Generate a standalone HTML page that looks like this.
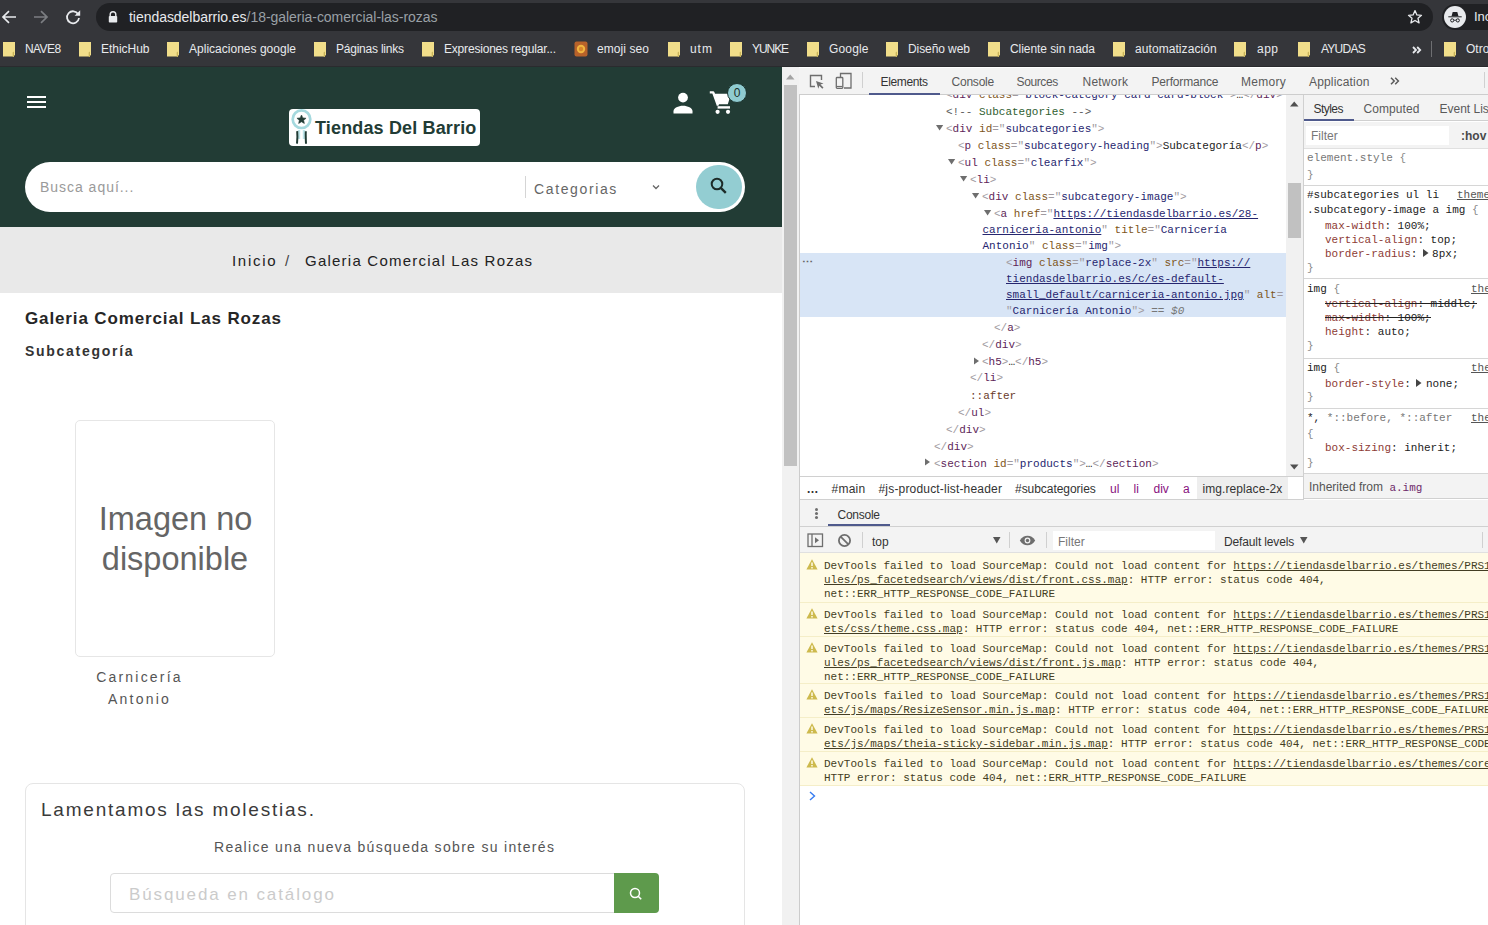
<!DOCTYPE html>
<html><head><meta charset="utf-8">
<style>
*{margin:0;padding:0;box-sizing:border-box}
html,body{width:1488px;height:925px;overflow:hidden;background:#fff;font-family:"Liberation Sans",sans-serif}
.a{position:absolute;white-space:nowrap}
#chrome{position:absolute;left:0;top:0;width:1488px;height:67px;background:#35363a}
#omni{position:absolute;left:96px;top:3px;width:1337px;height:28px;border-radius:14px;background:#202124}
.bm{position:absolute;top:41px;font-size:12px;color:#e8eaed;line-height:16px}
.fold{position:absolute;top:42px;width:12px;height:14px;background:#f1de8a}
#site{position:absolute;left:0;top:67px;width:782px;height:858px;background:#fff;overflow:hidden}
#pscroll{position:absolute;left:782px;top:67px;width:17px;height:858px;background:#f1f1f1}
#dt{position:absolute;left:799px;top:67px;width:689px;height:858px;background:#fff;border-left:1px solid #ccc;overflow:hidden}
.mono{font-family:"Liberation Mono",monospace;font-size:11px}
.tl{position:absolute;white-space:pre;font-family:"Liberation Mono",monospace;font-size:11px;line-height:16px}
.ui{position:absolute;white-space:nowrap;font-size:12px;line-height:16px}
.bm{white-space:nowrap}
#chrome{overflow:hidden}
</style></head><body>

<div id="chrome">
  <svg class="a" style="left:0;top:8px" width="18" height="18" viewBox="0 0 18 18"><path d="M16 9H3.5M9 3.2L3 9l6 5.8" stroke="#e8eaed" stroke-width="1.7" fill="none"/></svg>
  <svg class="a" style="left:32px;top:8px" width="18" height="18" viewBox="0 0 18 18"><path d="M2 9h12.5M9 3.2L15 9l-6 5.8" stroke="#7c7e82" stroke-width="1.7" fill="none"/></svg>
  <svg class="a" style="left:64px;top:8px" width="18" height="18" viewBox="0 0 18 18"><path d="M14.2 6.2A6 6 0 1 0 15 10" stroke="#e8eaed" stroke-width="1.8" fill="none"/><path d="M16.2 2.2v5.6h-5.6z" fill="#e8eaed"/></svg>
  <div id="omni"></div>
  <div class="a" style="left:0;top:66px;width:1488px;height:1px;background:#2a2b2e"></div>
  <svg class="a" style="left:108px;top:11px" width="10" height="12" viewBox="0 0 10 12"><path d="M2.2 5V3.6a2.8 2.8 0 0 1 5.6 0V5" stroke="#e8eaed" stroke-width="1.4" fill="none"/><rect x="0.8" y="5" width="8.4" height="6.5" rx="0.8" fill="#e8eaed"/></svg>
  <div class="a" style="left:129px;top:8px;font-size:14px;line-height:18px;color:#e8eaed;letter-spacing:-0.04px">tiendasdelbarrio.es<span style="color:#9aa0a6">/18-galeria-comercial-las-rozas</span></div>
  <svg class="a" style="left:1407px;top:9px" width="16" height="16" viewBox="0 0 16 16"><path d="M8 1.6l1.9 4.3 4.6.4-3.5 3 1.1 4.6L8 11.5l-4.1 2.4 1.1-4.6-3.5-3 4.6-.4z" stroke="#e8eaed" stroke-width="1.3" fill="none" stroke-linejoin="round"/></svg>
  <div class="a" style="left:1442px;top:4px;width:60px;height:26px;border-radius:13px;background:#202124"></div>
  <div class="a" style="left:1444px;top:6px;width:22px;height:22px;border-radius:11px;background:#e8eaed"></div>
  <svg class="a" style="left:1444px;top:6px" width="22" height="22" viewBox="0 0 22 22"><path d="M7.5 10.2l1.2-4.2h4.6l1.2 4.2z" fill="#202124"/><rect x="4.3" y="10.3" width="13.4" height="1" fill="#202124"/><circle cx="8.2" cy="14.4" r="1.6" stroke="#202124" stroke-width="1" fill="none"/><circle cx="13.8" cy="14.4" r="1.6" stroke="#202124" stroke-width="1" fill="none"/><path d="M9.8 14.2h2.4" stroke="#202124" stroke-width="0.9"/></svg>
  <div class="a" style="left:1474px;top:9px;font-size:13px;line-height:16px;color:#e8eaed">Incognito</div>
  <svg class="a" style="left:3px;top:42px" width="13" height="15" viewBox="0 0 13 15"><path d="M0 0h12v12.5l-1.2 2H0z" fill="#f1de8a"/><path d="M9.6 10.5l1.4-1v5.5H9.8z" fill="#c9b45a"/></svg>
  <div class="bm" style="left:25px;letter-spacing:-0.588px">NAVE8</div>
  <svg class="a" style="left:79px;top:42px" width="13" height="15" viewBox="0 0 13 15"><path d="M0 0h12v12.5l-1.2 2H0z" fill="#f1de8a"/><path d="M9.6 10.5l1.4-1v5.5H9.8z" fill="#c9b45a"/></svg>
  <div class="bm" style="left:101px;letter-spacing:-0.027px">EthicHub</div>
  <svg class="a" style="left:167px;top:42px" width="13" height="15" viewBox="0 0 13 15"><path d="M0 0h12v12.5l-1.2 2H0z" fill="#f1de8a"/><path d="M9.6 10.5l1.4-1v5.5H9.8z" fill="#c9b45a"/></svg>
  <div class="bm" style="left:189px;letter-spacing:0.015px">Aplicaciones google</div>
  <svg class="a" style="left:314px;top:42px" width="13" height="15" viewBox="0 0 13 15"><path d="M0 0h12v12.5l-1.2 2H0z" fill="#f1de8a"/><path d="M9.6 10.5l1.4-1v5.5H9.8z" fill="#c9b45a"/></svg>
  <div class="bm" style="left:336px;letter-spacing:-0.225px">Páginas links</div>
  <svg class="a" style="left:422px;top:42px" width="13" height="15" viewBox="0 0 13 15"><path d="M0 0h12v12.5l-1.2 2H0z" fill="#f1de8a"/><path d="M9.6 10.5l1.4-1v5.5H9.8z" fill="#c9b45a"/></svg>
  <div class="bm" style="left:444px;letter-spacing:-0.193px">Expresiones regular...</div>
  <div class="bm" style="left:597px;letter-spacing:0.068px">emoji seo</div>
  <svg class="a" style="left:668px;top:42px" width="13" height="15" viewBox="0 0 13 15"><path d="M0 0h12v12.5l-1.2 2H0z" fill="#f1de8a"/><path d="M9.6 10.5l1.4-1v5.5H9.8z" fill="#c9b45a"/></svg>
  <div class="bm" style="left:690px;letter-spacing:0.950px">utm</div>
  <svg class="a" style="left:730px;top:42px" width="13" height="15" viewBox="0 0 13 15"><path d="M0 0h12v12.5l-1.2 2H0z" fill="#f1de8a"/><path d="M9.6 10.5l1.4-1v5.5H9.8z" fill="#c9b45a"/></svg>
  <div class="bm" style="left:752px;letter-spacing:-1.061px">YUNKE</div>
  <svg class="a" style="left:807px;top:42px" width="13" height="15" viewBox="0 0 13 15"><path d="M0 0h12v12.5l-1.2 2H0z" fill="#f1de8a"/><path d="M9.6 10.5l1.4-1v5.5H9.8z" fill="#c9b45a"/></svg>
  <div class="bm" style="left:829px;letter-spacing:0.163px">Google</div>
  <svg class="a" style="left:886px;top:42px" width="13" height="15" viewBox="0 0 13 15"><path d="M0 0h12v12.5l-1.2 2H0z" fill="#f1de8a"/><path d="M9.6 10.5l1.4-1v5.5H9.8z" fill="#c9b45a"/></svg>
  <div class="bm" style="left:908px;letter-spacing:-0.089px">Diseño web</div>
  <svg class="a" style="left:988px;top:42px" width="13" height="15" viewBox="0 0 13 15"><path d="M0 0h12v12.5l-1.2 2H0z" fill="#f1de8a"/><path d="M9.6 10.5l1.4-1v5.5H9.8z" fill="#c9b45a"/></svg>
  <div class="bm" style="left:1010px;letter-spacing:-0.070px">Cliente sin nada</div>
  <svg class="a" style="left:1113px;top:42px" width="13" height="15" viewBox="0 0 13 15"><path d="M0 0h12v12.5l-1.2 2H0z" fill="#f1de8a"/><path d="M9.6 10.5l1.4-1v5.5H9.8z" fill="#c9b45a"/></svg>
  <div class="bm" style="left:1135px;letter-spacing:0.069px">automatización</div>
  <svg class="a" style="left:1234px;top:42px" width="13" height="15" viewBox="0 0 13 15"><path d="M0 0h12v12.5l-1.2 2H0z" fill="#f1de8a"/><path d="M9.6 10.5l1.4-1v5.5H9.8z" fill="#c9b45a"/></svg>
  <div class="bm" style="left:1257px;letter-spacing:0.492px">app</div>
  <svg class="a" style="left:1298px;top:42px" width="13" height="15" viewBox="0 0 13 15"><path d="M0 0h12v12.5l-1.2 2H0z" fill="#f1de8a"/><path d="M9.6 10.5l1.4-1v5.5H9.8z" fill="#c9b45a"/></svg>
  <div class="bm" style="left:1321px;letter-spacing:-0.751px">AYUDAS</div>
  <svg class="a" style="left:1444px;top:42px" width="13" height="15" viewBox="0 0 13 15"><path d="M0 0h12v12.5l-1.2 2H0z" fill="#f1de8a"/><path d="M9.6 10.5l1.4-1v5.5H9.8z" fill="#c9b45a"/></svg>
  <div class="bm" style="left:1466px">Otros marcadores</div>
  <svg class="a" style="left:574px;top:41px" width="15" height="16" viewBox="0 0 15 16"><rect x="0.5" y="0.5" width="13" height="15" rx="2" fill="#b8622a"/><circle cx="7" cy="8" r="4.2" fill="#f1b640"/><circle cx="7" cy="8" r="2.2" fill="#d8862d"/></svg>
  <svg class="a" style="left:1412px;top:46px" width="10" height="8" viewBox="0 0 10 8"><path d="M1 1l3 3-3 3M5.2 1l3 3-3 3" stroke="#e8eaed" stroke-width="1.8" fill="none"/></svg>
  <div class="a" style="left:1431px;top:41px;width:1px;height:16px;background:#6e6f72"></div>
</div>

<div id="site">
  <div class="a" style="left:0;top:0;width:782px;height:160px;background:#223c35"></div>
  <div class="a" style="left:27px;top:29px;width:19px;height:2px;background:#fff"></div>
  <div class="a" style="left:27px;top:34px;width:19px;height:2px;background:#fff"></div>
  <div class="a" style="left:27px;top:39px;width:19px;height:2px;background:#fff"></div>
  <div class="a" style="left:289px;top:42px;width:191px;height:37px;border-radius:4px;background:#fff"></div>
  <svg class="a" style="left:289px;top:42px" width="26" height="37" viewBox="0 0 26 37"><path d="M10 21v9M15 21v9" stroke="#bfe6ea" stroke-width="2.4"/><path d="M8.2 22.2c0.4 4 0.2 8.5-0.2 12.5M16.8 22.2c-0.2 4 0 8.5 0.2 12.5" stroke="#223c35" stroke-width="2" fill="none"/><circle cx="12.5" cy="10.2" r="8.8" fill="#fff" stroke="#a5d9de" stroke-width="2.7"/><path d="M12.5 6l1.35 2.9 3.2.35-2.4 2.1.7 3.1-2.85-1.7-2.85 1.7.7-3.1-2.4-2.1 3.2-.35z" fill="#223c35" stroke="#223c35" stroke-width="0.6" stroke-linejoin="round"/></svg>
  <div class="a" style="left:315px;top:51px;font-size:18px;line-height:20px;font-weight:bold;color:#223c35;letter-spacing:0.15px">Tiendas Del Barrio</div>
  <svg class="a" style="left:672px;top:25px" width="22" height="22" viewBox="0 0 22 22"><circle cx="11" cy="5.6" r="4.9" fill="#fff"/><path d="M1.5 21.5v-2.3c0-3.2 4.8-5.5 9.5-5.5s9.5 2.3 9.5 5.5v2.3z" fill="#fff"/></svg>
  <svg class="a" style="left:709px;top:24px" width="24" height="24" viewBox="0 0 24 24"><path d="M0.8 1.4h3.4l4.8 13.2" stroke="#fff" stroke-width="2.4" fill="none" stroke-linejoin="round"/><path d="M5 2.8h17l-3.2 10.4H8.6z" fill="#fff"/><rect x="8.6" y="15.2" width="12.4" height="2.4" fill="#fff"/><circle cx="8.6" cy="20.8" r="2.1" fill="#fff"/><circle cx="19" cy="20.8" r="2.1" fill="#fff"/></svg>
  <div class="a" style="left:727px;top:16px;width:20px;height:20px;border-radius:10px;background:#8fcbd0;border:1.5px solid #1c3530"></div>
  <div class="a" style="left:728px;top:18.5px;width:18px;text-align:center;font-size:12px;line-height:14px;color:#1a2e2a">0</div>
  <div class="a" style="left:25px;top:95px;width:720px;height:50px;border-radius:25px;background:#fff"></div>
  <div class="a" style="left:40px;top:112px;font-size:14px;line-height:16px;color:#9a9a9a;letter-spacing:0.97px">Busca aquí...</div>
  <div class="a" style="left:525px;top:109px;width:1px;height:22px;background:#d5d5d5"></div>
  <div class="a" style="left:534px;top:114px;font-size:14px;line-height:16px;color:#666;letter-spacing:1.63px">Categorias</div>
  <svg class="a" style="left:651px;top:117px" width="10" height="7" viewBox="0 0 10 7"><path d="M2 1.5l3 3 3-3" stroke="#666" stroke-width="1.3" fill="none"/></svg>
  <div class="a" style="left:696px;top:98px;width:46px;height:44px;border-radius:23px;background:#93cdd2"></div>
  <svg class="a" style="left:708px;top:108px" width="22" height="22" viewBox="0 0 22 22"><circle cx="9" cy="9" r="5.3" stroke="#1d2b28" stroke-width="2" fill="none"/><path d="M12.8 12.8l5 5" stroke="#1d2b28" stroke-width="2.4"/></svg>
  <div class="a" style="left:0;top:160px;width:782px;height:66px;background:#e9e9e9"></div>
  <div class="a" style="left:232px;top:184.5px;font-size:15px;line-height:18px;color:#222;letter-spacing:1.7px">Inicio</div>
  <div class="a" style="left:285px;top:184.5px;font-size:15px;line-height:18px;color:#444">/</div>
  <div class="a" style="left:305px;top:184.5px;font-size:15px;line-height:18px;color:#222;letter-spacing:1.23px">Galeria Comercial Las Rozas</div>
  <div class="a" style="left:25px;top:242px;font-size:17px;line-height:20px;font-weight:bold;color:#262626;letter-spacing:0.87px">Galeria Comercial Las Rozas</div>
  <div class="a" style="left:25px;top:276px;font-size:14px;line-height:16px;font-weight:bold;color:#333;letter-spacing:1.72px">Subcategoría</div>
  <div class="a" style="left:75px;top:353px;width:200px;height:237px;border:1px solid #e6e6e6;border-radius:5px;background:#fff"></div>
  <div class="a" style="left:75px;top:433px;width:200px;text-align:center;font-size:32.5px;line-height:39.5px;color:#656565;letter-spacing:0px;text-indent:1px">Imagen no<br>disponible</div>
  <div class="a" style="left:40px;top:599px;width:199px;text-align:center;font-size:14px;line-height:22px;color:#555;letter-spacing:2.2px">Carnicería<br>Antonio</div>
  <div class="a" style="left:25px;top:716px;width:720px;height:200px;border:1px solid #e5e5e5;border-radius:8px;background:#fff"></div>
  <div class="a" style="left:41px;top:732px;font-size:19px;line-height:22px;color:#3a3a3a;letter-spacing:1.78px">Lamentamos las molestias.</div>
  <div class="a" style="left:214px;top:772px;font-size:14px;line-height:16px;color:#555;letter-spacing:1.31px">Realice una nueva búsqueda sobre su interés</div>
  <div class="a" style="left:110px;top:806px;width:505px;height:40px;border:1px solid #dcdcdc;border-radius:4px 0 0 4px;background:#fff"></div>
  <div class="a" style="left:129px;top:818px;font-size:17px;line-height:20px;color:#cbcbcb;letter-spacing:1.88px">Búsqueda en catálogo</div>
  <div class="a" style="left:614px;top:806px;width:45px;height:40px;border-radius:0 4px 4px 0;background:#5e9a4c"></div>
  <svg class="a" style="left:627px;top:818px" width="18" height="18" viewBox="0 0 18 18"><circle cx="8" cy="8" r="4.5" stroke="#fff" stroke-width="1.5" fill="none"/><path d="M11.2 11.2l3 3" stroke="#fff" stroke-width="1.6"/></svg>
</div>
<div id="pscroll"><div class="a" style="left:2px;top:18px;width:13px;height:381px;background:#c1c1c1"></div><svg class="a" style="left:4px;top:7px" width="9" height="6" viewBox="0 0 9 6"><path d="M0 5.5h8.5L4.25 0.5z" fill="#a3a3a3"/></svg></div>
<div id="dt"></div>
<!--DT-->
<div class="a" style="left:799px;top:67px;width:689px;height:28px;background:#f3f3f3;border-bottom:1px solid #cdcdcd;border-top:1px solid #fff"></div>
<svg class="a" style="left:809px;top:74px" width="16" height="16" viewBox="0 0 16 16"><path d="M6 12.5H1.5v-11h11V6" stroke="#6e6e6e" stroke-width="1.4" fill="none"/><path d="M7 7l7.5 2.6-3 1 3 3-1.2 1.2-3-3-1 3z" fill="#6e6e6e"/></svg>
<svg class="a" style="left:835px;top:72px" width="18" height="18" viewBox="0 0 18 18"><path d="M5.5 5V1.5h10.5v14.5H9" stroke="#6e6e6e" stroke-width="1.3" fill="none"/><rect x="1.3" y="5.5" width="6.5" height="10.8" rx="0.8" stroke="#6e6e6e" stroke-width="1.3" fill="none"/><path d="M1.5 14.5h6" stroke="#6e6e6e" stroke-width="1.2"/></svg>
<div class="a" style="left:862px;top:72px;width:1px;height:16px;background:#d0d0d0"></div>
<div class="ui" style="left:880.5px;top:74px;color:#333;letter-spacing:-0.359px">Elements</div>
<div class="ui" style="left:951.5px;top:74px;color:#5a5a5a;letter-spacing:-0.222px">Console</div>
<div class="ui" style="left:1016.5px;top:74px;color:#5a5a5a;letter-spacing:-0.369px">Sources</div>
<div class="ui" style="left:1082.5px;top:74px;color:#5a5a5a;letter-spacing:0.231px">Network</div>
<div class="ui" style="left:1151.5px;top:74px;color:#5a5a5a;letter-spacing:-0.169px">Performance</div>
<div class="ui" style="left:1241.0px;top:74px;color:#5a5a5a;letter-spacing:0.291px">Memory</div>
<div class="ui" style="left:1309.0px;top:74px;color:#5a5a5a;letter-spacing:0.170px">Application</div>
<div class="a" style="left:869px;top:93px;width:71px;height:2px;background:#4f5a8c"></div>
<svg class="a" style="left:1390px;top:77px" width="10" height="8" viewBox="0 0 10 8"><path d="M1 0.8l3.2 3.2-3.2 3.2M5.2 0.8l3.2 3.2-3.2 3.2" stroke="#5a5a5a" stroke-width="1.5" fill="none"/></svg>
<div class="a" style="left:1484px;top:72px;width:1px;height:16px;background:#d0d0d0"></div>
<div class="a" style="left:800px;top:253px;width:486px;height:64px;background:#d8e5f6"></div>
<div class="ui" style="left:802px;top:254px;color:#666;font-size:11px;font-weight:bold;letter-spacing:0px">&#8943;</div>
<div class="a" style="left:800px;top:95px;width:486px;height:381px;overflow:hidden"><div class="a" style="left:-800px;top:-95px;width:1488px;height:925px"><div class="tl" style="left:946px;top:87.0px"><span style="color:#a09aa0">&lt;</span><span style="color:#5e1f59">div</span><span style="color:#222"> </span><span style="color:#7e5519">class</span><span style="color:#a09aa0">=&quot;</span><span style="color:#26266f">block-category card card-block</span><span style="color:#a09aa0">&quot;&gt;</span><span style="color:#222">…</span><span style="color:#a09aa0">&lt;/</span><span style="color:#5e1f59">div</span><span style="color:#a09aa0">&gt;</span></div>
<div class="tl" style="left:946px;top:104.0px"><span style="color:#5a5a5a">&lt;!-- </span><span style="color:#2f5e31">Subcategories</span><span style="color:#5a5a5a"> --&gt;</span></div>
<div class="tl" style="left:946px;top:121.0px"><span style="color:#a09aa0">&lt;</span><span style="color:#5e1f59">div</span><span style="color:#222"> </span><span style="color:#7e5519">id</span><span style="color:#a09aa0">=&quot;</span><span style="color:#26266f">subcategories</span><span style="color:#a09aa0">&quot;&gt;</span></div>
<div class="tl" style="left:958px;top:138.0px"><span style="color:#a09aa0">&lt;</span><span style="color:#5e1f59">p</span><span style="color:#222"> </span><span style="color:#7e5519">class</span><span style="color:#a09aa0">=&quot;</span><span style="color:#26266f">subcategory-heading</span><span style="color:#a09aa0">&quot;&gt;</span><span style="color:#222">Subcategoría</span><span style="color:#a09aa0">&lt;/</span><span style="color:#5e1f59">p</span><span style="color:#a09aa0">&gt;</span></div>
<div class="tl" style="left:958px;top:155.0px"><span style="color:#a09aa0">&lt;</span><span style="color:#5e1f59">ul</span><span style="color:#222"> </span><span style="color:#7e5519">class</span><span style="color:#a09aa0">=&quot;</span><span style="color:#26266f">clearfix</span><span style="color:#a09aa0">&quot;&gt;</span></div>
<div class="tl" style="left:970px;top:172.0px"><span style="color:#a09aa0">&lt;</span><span style="color:#5e1f59">li</span><span style="color:#a09aa0">&gt;</span></div>
<div class="tl" style="left:982px;top:189.0px"><span style="color:#a09aa0">&lt;</span><span style="color:#5e1f59">div</span><span style="color:#222"> </span><span style="color:#7e5519">class</span><span style="color:#a09aa0">=&quot;</span><span style="color:#26266f">subcategory-image</span><span style="color:#a09aa0">&quot;&gt;</span></div>
<div class="tl" style="left:994px;top:206.0px"><span style="color:#a09aa0">&lt;</span><span style="color:#5e1f59">a</span><span style="color:#222"> </span><span style="color:#7e5519">href</span><span style="color:#a09aa0">=&quot;</span><span style="color:#26266f;text-decoration:underline">https://tiendasdelbarrio.es/28-</span></div>
<div class="tl" style="left:982.5px;top:222.0px"><span style="color:#26266f;text-decoration:underline">carniceria-antonio</span><span style="color:#a09aa0">&quot;</span><span style="color:#222"> </span><span style="color:#7e5519">title</span><span style="color:#a09aa0">=&quot;</span><span style="color:#26266f">Carnicería</span></div>
<div class="tl" style="left:982.5px;top:238.0px"><span style="color:#26266f">Antonio</span><span style="color:#a09aa0">&quot;</span><span style="color:#222"> </span><span style="color:#7e5519">class</span><span style="color:#a09aa0">=&quot;</span><span style="color:#26266f">img</span><span style="color:#a09aa0">&quot;&gt;</span></div>
<div class="tl" style="left:1006px;top:255.0px"><span style="color:#a09aa0">&lt;</span><span style="color:#5e1f59">img</span><span style="color:#222"> </span><span style="color:#7e5519">class</span><span style="color:#a09aa0">=&quot;</span><span style="color:#26266f">replace-2x</span><span style="color:#a09aa0">&quot;</span><span style="color:#222"> </span><span style="color:#7e5519">src</span><span style="color:#a09aa0">=&quot;</span><span style="color:#26266f;text-decoration:underline">https://</span></div>
<div class="tl" style="left:1006px;top:271.0px"><span style="color:#26266f;text-decoration:underline">tiendasdelbarrio.es/c/es-default-</span></div>
<div class="tl" style="left:1006px;top:287.0px"><span style="color:#26266f;text-decoration:underline">small_default/carniceria-antonio.jpg</span><span style="color:#a09aa0">&quot;</span><span style="color:#222"> </span><span style="color:#7e5519">alt</span><span style="color:#a09aa0">=</span></div>
<div class="tl" style="left:1006px;top:303.0px"><span style="color:#a09aa0">&quot;</span><span style="color:#26266f">Carnicería Antonio</span><span style="color:#a09aa0">&quot;&gt;</span><span style="color:#777;font-style:italic"> == $0</span></div>
<div class="tl" style="left:994px;top:320.0px"><span style="color:#a09aa0">&lt;/</span><span style="color:#5e1f59">a</span><span style="color:#a09aa0">&gt;</span></div>
<div class="tl" style="left:982px;top:337.0px"><span style="color:#a09aa0">&lt;/</span><span style="color:#5e1f59">div</span><span style="color:#a09aa0">&gt;</span></div>
<div class="tl" style="left:982px;top:354.0px"><span style="color:#a09aa0">&lt;</span><span style="color:#5e1f59">h5</span><span style="color:#a09aa0">&gt;</span><span style="color:#222">…</span><span style="color:#a09aa0">&lt;/</span><span style="color:#5e1f59">h5</span><span style="color:#a09aa0">&gt;</span></div>
<div class="tl" style="left:970px;top:370.0px"><span style="color:#a09aa0">&lt;/</span><span style="color:#5e1f59">li</span><span style="color:#a09aa0">&gt;</span></div>
<div class="tl" style="left:970px;top:388.0px"><span style="color:#6a3a2a">::after</span></div>
<div class="tl" style="left:958px;top:405.0px"><span style="color:#a09aa0">&lt;/</span><span style="color:#5e1f59">ul</span><span style="color:#a09aa0">&gt;</span></div>
<div class="tl" style="left:946px;top:422.0px"><span style="color:#a09aa0">&lt;/</span><span style="color:#5e1f59">div</span><span style="color:#a09aa0">&gt;</span></div>
<div class="tl" style="left:934px;top:439.0px"><span style="color:#a09aa0">&lt;/</span><span style="color:#5e1f59">div</span><span style="color:#a09aa0">&gt;</span></div>
<div class="tl" style="left:934px;top:456.0px"><span style="color:#a09aa0">&lt;</span><span style="color:#5e1f59">section</span><span style="color:#222"> </span><span style="color:#7e5519">id</span><span style="color:#a09aa0">=&quot;</span><span style="color:#26266f">products</span><span style="color:#a09aa0">&quot;&gt;</span><span style="color:#222">…</span><span style="color:#a09aa0">&lt;/</span><span style="color:#5e1f59">section</span><span style="color:#a09aa0">&gt;</span></div>
<svg class="a" style="left:936px;top:125px" width="8" height="6" viewBox="0 0 8 6"><path d="M0 0h7.2L3.6 5.6z" fill="#6e6e6e"/></svg>
<svg class="a" style="left:948px;top:159px" width="8" height="6" viewBox="0 0 8 6"><path d="M0 0h7.2L3.6 5.6z" fill="#6e6e6e"/></svg>
<svg class="a" style="left:960px;top:176px" width="8" height="6" viewBox="0 0 8 6"><path d="M0 0h7.2L3.6 5.6z" fill="#6e6e6e"/></svg>
<svg class="a" style="left:972px;top:193px" width="8" height="6" viewBox="0 0 8 6"><path d="M0 0h7.2L3.6 5.6z" fill="#6e6e6e"/></svg>
<svg class="a" style="left:984px;top:210px" width="8" height="6" viewBox="0 0 8 6"><path d="M0 0h7.2L3.6 5.6z" fill="#6e6e6e"/></svg>
<svg class="a" style="left:973.5px;top:357px" width="6" height="8" viewBox="0 0 6 8"><path d="M0 0.5v7l5-3.5z" fill="#6e6e6e"/></svg>
<svg class="a" style="left:925px;top:458px" width="6" height="8" viewBox="0 0 6 8"><path d="M0 0.5v7l5-3.5z" fill="#6e6e6e"/></svg></div></div>
<div class="a" style="left:1286px;top:95px;width:17px;height:381px;background:#f1f1f1"></div>
<div class="a" style="left:1288px;top:183px;width:13px;height:55px;background:#c1c1c1"></div>
<svg class="a" style="left:1290px;top:101px" width="9" height="6" viewBox="0 0 9 6"><path d="M0 5.5h8.5L4.25 0.5z" fill="#505050"/></svg>
<svg class="a" style="left:1290px;top:464px" width="9" height="6" viewBox="0 0 9 6"><path d="M0 0.5h8.5L4.25 5.5z" fill="#505050"/></svg>
<div class="a" style="left:800px;top:476px;width:503px;height:24px;background:#fff;border-top:1px solid #d0d0d0;border-bottom:1px solid #d0d0d0"></div>
<div class="a" style="left:1197px;top:477px;width:91px;height:22px;background:#eeeeee"></div>
<div class="ui" style="left:806.5px;top:481px;color:#333;font-weight:bold;">…</div>
<div class="ui" style="left:831.5px;top:481px;color:#333;letter-spacing:0.253px;">#main</div>
<div class="ui" style="left:878.5px;top:481px;color:#333;letter-spacing:0.182px;">#js-product-list-header</div>
<div class="ui" style="left:1015.0px;top:481px;color:#333;letter-spacing:-0.044px;">#subcategories</div>
<div class="ui" style="left:1110.0px;top:481px;color:#881280;">ul</div>
<div class="ui" style="left:1133.5px;top:481px;color:#881280;">li</div>
<div class="ui" style="left:1153.5px;top:481px;color:#881280;">div</div>
<div class="ui" style="left:1183.0px;top:481px;color:#881280;">a</div>
<div class="ui" style="left:1202.5px;top:481px;color:#333;letter-spacing:0.084px;">img.replace-2x</div>
<div class="a" style="left:1303px;top:95px;width:185px;height:405px;background:#fff;border-left:1px solid #d0d0d0"></div>
<div class="a" style="left:1304px;top:95px;width:184px;height:26px;background:#f3f3f3;border-bottom:1px solid #d0d0d0"></div>
<div class="ui" style="left:1313.5px;top:101px;color:#333;letter-spacing:-0.534px;">Styles</div>
<div class="ui" style="left:1363.5px;top:101px;color:#5a5a5a;letter-spacing:0.077px;">Computed</div>
<div class="ui" style="left:1439.5px;top:101px;color:#5a5a5a;">Event Listeners</div>
<div class="a" style="left:1304px;top:119px;width:50px;height:2px;background:#4f5a8c"></div>
<div class="a" style="left:1304px;top:122px;width:184px;height:27px;background:#f3f3f3;border-bottom:1px solid #e0e0e0"></div>
<div class="a" style="left:1306px;top:126px;width:143px;height:19px;background:#fff"></div>
<div class="ui" style="left:1311px;top:128px;color:#777">Filter</div>
<div class="ui" style="left:1461px;top:128px;color:#4a4a4a;font-weight:bold">:hov</div>
<div class="a" style="left:1304px;top:149px;width:184px;height:350px;overflow:hidden"><div class="a" style="left:-1304px;top:-149px;width:1488px;height:925px"><div class="tl" style="left:1307px;top:150.0px"><span style="color:#777">element.style </span><span style="color:#8a8a8a">{</span></div>
<div class="tl" style="left:1307px;top:167.0px"><span style="color:#8a8a8a">}</span></div>
<div class="tl" style="left:1307px;top:187.0px"><span style="color:#222">#subcategories ul li</span></div>
<div class="tl" style="left:1307px;top:202.0px"><span style="color:#222">.subcategory-image a img </span><span style="color:#8a8a8a">{</span></div>
<div class="tl" style="left:1325px;top:218.0px"><span style="color:#8e3b35">max-width</span><span style="color:#222">: 100%;</span></div>
<div class="tl" style="left:1325px;top:232.0px"><span style="color:#8e3b35">vertical-align</span><span style="color:#222">: top;</span></div>
<div class="tl" style="left:1325px;top:246.0px"><span style="color:#8e3b35">border-radius</span><span style="color:#222">: </span><span style="display:inline-block;width:8px"></span><span style="color:#222">8px;</span></div>
<div class="tl" style="left:1307px;top:260.0px"><span style="color:#8a8a8a">}</span></div>
<div class="tl" style="left:1307px;top:281.0px"><span style="color:#222">img </span><span style="color:#8a8a8a">{</span></div>
<div class="tl" style="left:1325px;top:296.0px"><span style="color:#8e3b35">vertical-align</span><span style="color:#222">: middle;</span></div>
<div class="tl" style="left:1325px;top:310.0px"><span style="color:#8e3b35">max-width</span><span style="color:#222">: 100%;</span></div>
<div class="tl" style="left:1325px;top:324.0px"><span style="color:#8e3b35">height</span><span style="color:#222">: auto;</span></div>
<div class="tl" style="left:1307px;top:338.0px"><span style="color:#8a8a8a">}</span></div>
<div class="tl" style="left:1307px;top:360.0px"><span style="color:#222">img </span><span style="color:#8a8a8a">{</span></div>
<div class="tl" style="left:1325px;top:376.0px"><span style="color:#8e3b35">border-style</span><span style="color:#222">: </span><span style="display:inline-block;width:8.6px"></span><span style="color:#222">none;</span></div>
<div class="tl" style="left:1307px;top:389.0px"><span style="color:#8a8a8a">}</span></div>
<div class="tl" style="left:1307px;top:410.0px"><span style="color:#222">*, </span><span style="color:#777">*::before, *::after</span></div>
<div class="tl" style="left:1307px;top:426.0px"><span style="color:#8a8a8a">{</span></div>
<div class="tl" style="left:1325px;top:440.0px"><span style="color:#8e3b35">box-sizing</span><span style="color:#222">: inherit;</span></div>
<div class="tl" style="left:1307px;top:455.0px"><span style="color:#8a8a8a">}</span></div>
<div class="tl" style="left:1457px;top:187.0px"><span style="color:#555;text-decoration:underline">theme.css:1</span></div>
<div class="tl" style="left:1471px;top:281.0px"><span style="color:#555;text-decoration:underline">theme.css:1</span></div>
<div class="tl" style="left:1471px;top:360.0px"><span style="color:#555;text-decoration:underline">theme.css:1</span></div>
<div class="tl" style="left:1471px;top:410.0px"><span style="color:#555;text-decoration:underline">theme.css:1</span></div>
<div class="a" style="left:1304px;top:185px;width:184px;height:1px;background:#d6d6d6"></div>
<div class="a" style="left:1304px;top:278px;width:184px;height:1px;background:#d6d6d6"></div>
<div class="a" style="left:1304px;top:357.5px;width:184px;height:1px;background:#d6d6d6"></div>
<div class="a" style="left:1304px;top:408px;width:184px;height:1px;background:#d6d6d6"></div>
<div class="a" style="left:1304px;top:473px;width:184px;height:1px;background:#d6d6d6"></div>
<div class="a" style="left:1325px;top:303px;width:152px;height:1px;background:#222"></div>
<div class="a" style="left:1325px;top:317px;width:106px;height:1px;background:#222"></div>
<svg class="a" style="left:1423px;top:249px" width="6" height="8" viewBox="0 0 6 8"><path d="M0 0v8l5.5-4z" fill="#444"/></svg>
<svg class="a" style="left:1416px;top:379px" width="6" height="8" viewBox="0 0 6 8"><path d="M0 0v8l5.5-4z" fill="#444"/></svg>
<div class="a" style="left:1304px;top:474px;width:184px;height:25px;background:#f3f3f3;border-bottom:1px solid #d0d0d0"></div>
<div class="ui" style="left:1309px;top:479px;color:#555">Inherited from <span style="margin-left:3px;font-family:'Liberation Mono',monospace;font-size:11px;color:#6e2a6a">a.img</span></div></div></div>
<div class="a" style="left:800px;top:500px;width:688px;height:27px;background:#f3f3f3;border-bottom:1px solid #d0d0d0"></div>
<div class="a" style="left:815px;top:508px;width:3px;height:3px;border-radius:2px;background:#6e6e6e;box-shadow:0 4px 0 #6e6e6e,0 8px 0 #6e6e6e"></div>
<div class="ui" style="left:837.5px;top:507px;color:#333;letter-spacing:-0.255px">Console</div>
<div class="a" style="left:828px;top:524px;width:62px;height:2px;background:#4f5a8c"></div>
<div class="a" style="left:800px;top:527px;width:688px;height:26px;background:#f3f3f3;border-bottom:1px solid #e0e0e0"></div>
<svg class="a" style="left:807px;top:533px" width="17" height="15" viewBox="0 0 17 15"><rect x="1" y="1" width="14.5" height="12.5" stroke="#6e6e6e" stroke-width="1.3" fill="none"/><path d="M5 1v12.5" stroke="#6e6e6e" stroke-width="1.3"/><path d="M8 4.3v6l4-3z" fill="#6e6e6e"/></svg>
<svg class="a" style="left:837px;top:533px" width="15" height="15" viewBox="0 0 15 15"><circle cx="7.5" cy="7.5" r="5.6" stroke="#6e6e6e" stroke-width="1.8" fill="none"/><path d="M3.6 3.6l7.8 7.8" stroke="#6e6e6e" stroke-width="1.8"/></svg>
<div class="a" style="left:862px;top:532px;width:1px;height:16px;background:#d0d0d0"></div>
<div class="ui" style="left:872px;top:534px;color:#333">top</div>
<svg class="a" style="left:993px;top:537px" width="8" height="7" viewBox="0 0 8 7"><path d="M0 0h7.5L3.75 6.5z" fill="#555"/></svg>
<div class="a" style="left:1009px;top:532px;width:1px;height:16px;background:#d0d0d0"></div>
<svg class="a" style="left:1019px;top:535px" width="17" height="11" viewBox="0 0 17 11"><path d="M0.8 5.5C3 2 5.5 0.8 8.5 0.8S14 2 16.2 5.5C14 9 11.5 10.2 8.5 10.2S3 9 0.8 5.5z" fill="#6e6e6e"/><circle cx="8.5" cy="5.5" r="2.9" fill="#f3f3f3"/><circle cx="8.5" cy="5.5" r="1.7" fill="#6e6e6e"/></svg>
<div class="a" style="left:1046px;top:532px;width:1px;height:16px;background:#d0d0d0"></div>
<div class="a" style="left:1053px;top:531px;width:162px;height:19px;background:#fff"></div>
<div class="ui" style="left:1058px;top:534px;color:#777">Filter</div>
<div class="ui" style="left:1224px;top:534px;color:#333;letter-spacing:-0.133px">Default levels</div>
<svg class="a" style="left:1300px;top:537px" width="8" height="7" viewBox="0 0 8 7"><path d="M0 0h7.5L3.75 6.5z" fill="#555"/></svg>
<div class="a" style="left:1482px;top:532px;width:1px;height:16px;background:#d0d0d0"></div>
<div class="a" style="left:800px;top:553px;width:688px;height:372px;overflow:hidden"><div class="a" style="left:-800px;top:-553px;width:1488px;height:925px"><div class="a" style="left:800px;top:553px;width:688px;height:232px;background:#fffbe6"></div>
<div class="a" style="left:800px;top:602px;width:688px;height:1px;background:#f5eec8"></div>
<svg class="a" style="left:806px;top:559px" width="12" height="11" viewBox="0 0 12 11"><path d="M6 0.2L11.6 10.4H0.4z" fill="#cdb94c"/><path d="M6 3.4v3.6M6 8v1.4" stroke="#fffbe6" stroke-width="1.5"/></svg>
<div class="tl" style="left:824px;top:558.0px"><span style="color:#433d22">DevTools failed to load SourceMap: Could not load content for </span><span style="color:#433d23;text-decoration:underline">https://tiendasdelbarrio.es/themes/PRS1/modules/ps_facetedsearch</span></div>
<div class="tl" style="left:824px;top:572.0px"><span style="color:#433d22"></span><span style="color:#433d23;text-decoration:underline">ules/ps_facetedsearch/views/dist/front.css.map</span><span style="color:#433d22">: HTTP error: status code 404,</span></div>
<div class="tl" style="left:824px;top:586.0px"><span style="color:#433d22">net::ERR_HTTP_RESPONSE_CODE_FAILURE</span></div>
<div class="a" style="left:800px;top:636px;width:688px;height:1px;background:#f5eec8"></div>
<svg class="a" style="left:806px;top:608px" width="12" height="11" viewBox="0 0 12 11"><path d="M6 0.2L11.6 10.4H0.4z" fill="#cdb94c"/><path d="M6 3.4v3.6M6 8v1.4" stroke="#fffbe6" stroke-width="1.5"/></svg>
<div class="tl" style="left:824px;top:607.0px"><span style="color:#433d22">DevTools failed to load SourceMap: Could not load content for </span><span style="color:#433d23;text-decoration:underline">https://tiendasdelbarrio.es/themes/PRS1/assets</span></div>
<div class="tl" style="left:824px;top:621.0px"><span style="color:#433d22"></span><span style="color:#433d23;text-decoration:underline">ets/css/theme.css.map</span><span style="color:#433d22">: HTTP error: status code 404, net::ERR_HTTP_RESPONSE_CODE_FAILURE</span></div>
<div class="a" style="left:800px;top:683px;width:688px;height:1px;background:#f5eec8"></div>
<svg class="a" style="left:806px;top:642px" width="12" height="11" viewBox="0 0 12 11"><path d="M6 0.2L11.6 10.4H0.4z" fill="#cdb94c"/><path d="M6 3.4v3.6M6 8v1.4" stroke="#fffbe6" stroke-width="1.5"/></svg>
<div class="tl" style="left:824px;top:641.0px"><span style="color:#433d22">DevTools failed to load SourceMap: Could not load content for </span><span style="color:#433d23;text-decoration:underline">https://tiendasdelbarrio.es/themes/PRS1/modules/ps_facetedsearch</span></div>
<div class="tl" style="left:824px;top:655.0px"><span style="color:#433d22"></span><span style="color:#433d23;text-decoration:underline">ules/ps_facetedsearch/views/dist/front.js.map</span><span style="color:#433d22">: HTTP error: status code 404,</span></div>
<div class="tl" style="left:824px;top:669.0px"><span style="color:#433d22">net::ERR_HTTP_RESPONSE_CODE_FAILURE</span></div>
<div class="a" style="left:800px;top:717px;width:688px;height:1px;background:#f5eec8"></div>
<svg class="a" style="left:806px;top:689px" width="12" height="11" viewBox="0 0 12 11"><path d="M6 0.2L11.6 10.4H0.4z" fill="#cdb94c"/><path d="M6 3.4v3.6M6 8v1.4" stroke="#fffbe6" stroke-width="1.5"/></svg>
<div class="tl" style="left:824px;top:688.0px"><span style="color:#433d22">DevTools failed to load SourceMap: Could not load content for </span><span style="color:#433d23;text-decoration:underline">https://tiendasdelbarrio.es/themes/PRS1/assets</span></div>
<div class="tl" style="left:824px;top:702.0px"><span style="color:#433d22"></span><span style="color:#433d23;text-decoration:underline">ets/js/maps/ResizeSensor.min.js.map</span><span style="color:#433d22">: HTTP error: status code 404, net::ERR_HTTP_RESPONSE_CODE_FAILURE</span></div>
<div class="a" style="left:800px;top:751px;width:688px;height:1px;background:#f5eec8"></div>
<svg class="a" style="left:806px;top:723px" width="12" height="11" viewBox="0 0 12 11"><path d="M6 0.2L11.6 10.4H0.4z" fill="#cdb94c"/><path d="M6 3.4v3.6M6 8v1.4" stroke="#fffbe6" stroke-width="1.5"/></svg>
<div class="tl" style="left:824px;top:722.0px"><span style="color:#433d22">DevTools failed to load SourceMap: Could not load content for </span><span style="color:#433d23;text-decoration:underline">https://tiendasdelbarrio.es/themes/PRS1/assets</span></div>
<div class="tl" style="left:824px;top:736.0px"><span style="color:#433d22"></span><span style="color:#433d23;text-decoration:underline">ets/js/maps/theia-sticky-sidebar.min.js.map</span><span style="color:#433d22">: HTTP error: status code 404, net::ERR_HTTP_RESPONSE_CODE_FAILURE</span></div>
<div class="a" style="left:800px;top:785px;width:688px;height:1px;background:#f5eec8"></div>
<svg class="a" style="left:806px;top:757px" width="12" height="11" viewBox="0 0 12 11"><path d="M6 0.2L11.6 10.4H0.4z" fill="#cdb94c"/><path d="M6 3.4v3.6M6 8v1.4" stroke="#fffbe6" stroke-width="1.5"/></svg>
<div class="tl" style="left:824px;top:756.0px"><span style="color:#433d22">DevTools failed to load SourceMap: Could not load content for </span><span style="color:#433d23;text-decoration:underline">https://tiendasdelbarrio.es/themes/core.js.map</span></div>
<div class="tl" style="left:824px;top:770.0px"><span style="color:#433d22">HTTP error: status code 404, net::ERR_HTTP_RESPONSE_CODE_FAILURE</span></div>
<svg class="a" style="left:809px;top:791px" width="7" height="10" viewBox="0 0 7 10"><path d="M1 1l4.5 4-4.5 4" stroke="#367cf1" stroke-width="1.4" fill="none"/></svg></div></div>
<!--/DT-->

</body></html>
